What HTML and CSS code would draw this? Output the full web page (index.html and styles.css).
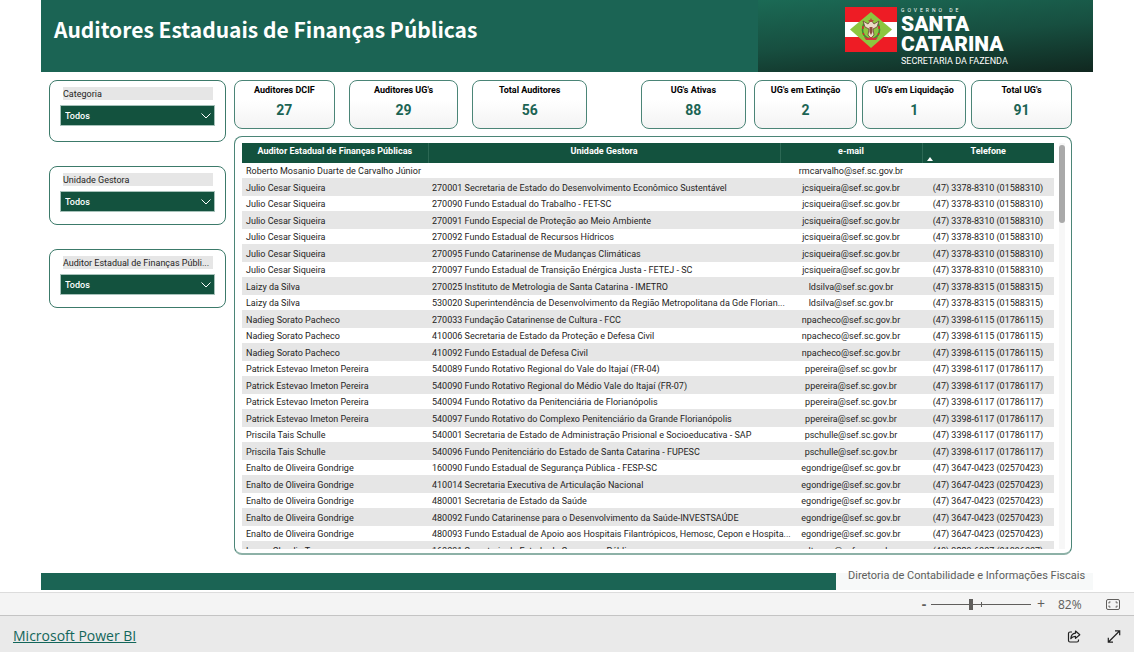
FILE: index.html
```html
<!DOCTYPE html>
<html lang="pt-BR">
<head>
<meta charset="utf-8">
<meta name="viewport" content="width=device-width, initial-scale=1">
<title>Auditores Estaduais de Finanças Públicas</title>
<link rel="stylesheet" href="styles.css">
</head>
<body>
<main class="report">
  <header class="banner">
    <h1 class="banner-title">Auditores Estaduais de Finanças Públicas</h1>
    <div class="brand">
      <svg class="flag" viewBox="0 0 52 45" aria-hidden="true">
        <rect width="52" height="15" fill="#ee1c25"/>
        <rect y="15" width="52" height="15" fill="#fff"/>
        <rect y="30" width="52" height="15" fill="#ee1c25"/>
        <path d="M26 5 47 22.500 26 41 5 22.500z" fill="#8cc63f"/>
        <path d="M19 16q-3 7 0 12q3 4 7 4q4 0 7-4q3-5 0-12" fill="none" stroke="#3c8a35" stroke-width="1.500"/>
        <path d="M18 19v3M34 19v3M18 26l1 2M34 26l-1 2" stroke="#d8282f" stroke-width="1.500"/>
        <path d="M18 14l5 3 3-4 3 4 5-3-2 6-4 2 1 6-3 3-3-3 1-6-4-2z" fill="#ecdcc8" stroke="#6b4437" stroke-width=".8"/>
        <path d="M26 11l1 2h2l-2 2h-2l-2-2h2z" fill="#b5493c"/>
        <path d="M24.500 20h3v5l-1.500 3-1.500-3z" fill="#8d4b3b"/>
        <path d="M19 30l4 1 3-1 3 1 4-1-2 3h-10z" fill="#d3343a"/>
      </svg>
      <div class="brand-text">
        <span class="brand-over">GOVERNO DE</span>
        <span class="brand-name">SANTA</span>
        <span class="brand-name">CATARINA</span>
        <span class="brand-unit">SECRETARIA DA FAZENDA</span>
      </div>
    </div>
  </header>

  <div class="content">
    <aside class="filters">
      <div class="filter filter-first">
        <label for="f-cat">Categoria</label>
        <div class="select-box"><select id="f-cat"><option>Todos</option></select>
          <svg viewBox="0 0 10 6" aria-hidden="true"><path d="M.5.5 5 5 9.500.5"/></svg></div>
      </div>
      <div class="filter">
        <label for="f-ug">Unidade Gestora</label>
        <div class="select-box"><select id="f-ug"><option>Todos</option></select>
          <svg viewBox="0 0 10 6" aria-hidden="true"><path d="M.5.5 5 5 9.500.5"/></svg></div>
      </div>
      <div class="filter">
        <label for="f-aud">Auditor Estadual de Finanças Públi...</label>
        <div class="select-box"><select id="f-aud"><option>Todos</option></select>
          <svg viewBox="0 0 10 6" aria-hidden="true"><path d="M.5.5 5 5 9.500.5"/></svg></div>
      </div>
    </aside>

    <div class="data">
      <div class="cards">
        <div class="cards-auditors">
          <section class="card"><h2>Auditores DCIF</h2><p>27</p></section>
          <section class="card"><h2>Auditores UG's</h2><p>29</p></section>
          <section class="card"><h2>Total Auditores</h2><p>56</p></section>
        </div>
        <div class="cards-units">
          <section class="card card-active"><h2>UG's Ativas</h2><p>88</p></section>
          <section class="card"><h2>UG's em Extinção</h2><p>2</p></section>
          <section class="card"><h2>UG's em Liquidação</h2><p>1</p></section>
          <section class="card"><h2>Total UG's</h2><p>91</p></section>
        </div>
      </div>

      <div class="panel">
        <div class="viewport">
          <table class="grid">
            <colgroup><col class="c-name"><col class="c-unit"><col class="c-mail"><col class="c-phone"></colgroup>
            <thead><tr><th>Auditor Estadual de Finanças Públicas</th><th>Unidade Gestora</th><th>e-mail</th><th class="sorted">Telefone</th></tr></thead>
            <tbody>
              <tr><td>Roberto Mosanio Duarte de Carvalho Júnior</td><td></td><td>rmcarvalho@sef.sc.gov.br</td><td></td></tr>
              <tr><td>Julio Cesar Siqueira</td><td>270001 Secretaria de Estado do Desenvolvimento Econômico Sustentável</td><td>jcsiqueira@sef.sc.gov.br</td><td>(47) 3378-8310 (01588310)</td></tr>
              <tr><td>Julio Cesar Siqueira</td><td>270090 Fundo Estadual do Trabalho - FET-SC</td><td>jcsiqueira@sef.sc.gov.br</td><td>(47) 3378-8310 (01588310)</td></tr>
              <tr><td>Julio Cesar Siqueira</td><td>270091 Fundo Especial de Proteção ao Meio Ambiente</td><td>jcsiqueira@sef.sc.gov.br</td><td>(47) 3378-8310 (01588310)</td></tr>
              <tr><td>Julio Cesar Siqueira</td><td>270092 Fundo Estadual de Recursos Hídricos</td><td>jcsiqueira@sef.sc.gov.br</td><td>(47) 3378-8310 (01588310)</td></tr>
              <tr><td>Julio Cesar Siqueira</td><td>270095 Fundo Catarinense de Mudanças Climáticas</td><td>jcsiqueira@sef.sc.gov.br</td><td>(47) 3378-8310 (01588310)</td></tr>
              <tr><td>Julio Cesar Siqueira</td><td>270097 Fundo Estadual de Transição Enérgica Justa - FETEJ - SC</td><td>jcsiqueira@sef.sc.gov.br</td><td>(47) 3378-8310 (01588310)</td></tr>
              <tr><td>Laizy da Silva</td><td>270025 Instituto de Metrologia de Santa Catarina - IMETRO</td><td>ldsilva@sef.sc.gov.br</td><td>(47) 3378-8315 (01588315)</td></tr>
              <tr><td>Laizy da Silva</td><td>530020 Superintendência de Desenvolvimento da Região Metropolitana da Gde Florian...</td><td>ldsilva@sef.sc.gov.br</td><td>(47) 3378-8315 (01588315)</td></tr>
              <tr><td>Nadieg Sorato Pacheco</td><td>270033 Fundação Catarinense de Cultura - FCC</td><td>npacheco@sef.sc.gov.br</td><td>(47) 3398-6115 (01786115)</td></tr>
              <tr><td>Nadieg Sorato Pacheco</td><td>410006 Secretaria de Estado da Proteção e Defesa Civil</td><td>npacheco@sef.sc.gov.br</td><td>(47) 3398-6115 (01786115)</td></tr>
              <tr><td>Nadieg Sorato Pacheco</td><td>410092 Fundo Estadual de Defesa Civil</td><td>npacheco@sef.sc.gov.br</td><td>(47) 3398-6115 (01786115)</td></tr>
              <tr><td>Patrick Estevao Imeton Pereira</td><td>540089 Fundo Rotativo Regional do Vale do Itajaí (FR-04)</td><td>ppereira@sef.sc.gov.br</td><td>(47) 3398-6117 (01786117)</td></tr>
              <tr><td>Patrick Estevao Imeton Pereira</td><td>540090 Fundo Rotativo Regional do Médio Vale do Itajaí (FR-07)</td><td>ppereira@sef.sc.gov.br</td><td>(47) 3398-6117 (01786117)</td></tr>
              <tr><td>Patrick Estevao Imeton Pereira</td><td>540094 Fundo Rotativo da Penitenciária de Florianópolis</td><td>ppereira@sef.sc.gov.br</td><td>(47) 3398-6117 (01786117)</td></tr>
              <tr><td>Patrick Estevao Imeton Pereira</td><td>540097 Fundo Rotativo do Complexo Penitenciário da Grande Florianópolis</td><td>ppereira@sef.sc.gov.br</td><td>(47) 3398-6117 (01786117)</td></tr>
              <tr><td>Priscila Tais Schulle</td><td>540001 Secretaria de Estado de Administração Prisional e Socioeducativa - SAP</td><td>pschulle@sef.sc.gov.br</td><td>(47) 3398-6117 (01786117)</td></tr>
              <tr><td>Priscila Tais Schulle</td><td>540096 Fundo Penitenciário do Estado de Santa Catarina - FUPESC</td><td>pschulle@sef.sc.gov.br</td><td>(47) 3398-6117 (01786117)</td></tr>
              <tr><td>Enalto de Oliveira Gondrige</td><td>160090 Fundo Estadual de Segurança Pública - FESP-SC</td><td>egondrige@sef.sc.gov.br</td><td>(47) 3647-0423 (02570423)</td></tr>
              <tr><td>Enalto de Oliveira Gondrige</td><td>410014 Secretaria Executiva de Articulação Nacional</td><td>egondrige@sef.sc.gov.br</td><td>(47) 3647-0423 (02570423)</td></tr>
              <tr><td>Enalto de Oliveira Gondrige</td><td>480001 Secretaria de Estado da Saúde</td><td>egondrige@sef.sc.gov.br</td><td>(47) 3647-0423 (02570423)</td></tr>
              <tr><td>Enalto de Oliveira Gondrige</td><td>480092 Fundo Catarinense para o Desenvolvimento da Saúde-INVESTSAÚDE</td><td>egondrige@sef.sc.gov.br</td><td>(47) 3647-0423 (02570423)</td></tr>
              <tr><td>Enalto de Oliveira Gondrige</td><td>480093 Fundo Estadual de Apoio aos Hospitais Filantrópicos, Hemosc, Cepon e Hospita...</td><td>egondrige@sef.sc.gov.br</td><td>(47) 3647-0423 (02570423)</td></tr>
              <tr><td>Luana Claudia Torres</td><td>160091 Secretaria de Estado da Segurança Pública</td><td>ltorres@sef.sc.gov.br</td><td>(48) 3229-6007 (01896007)</td></tr>
            </tbody>
          </table>
        </div>
        <div class="scrollbar"><div class="thumb"></div></div>
      </div>
    </div>
  </div>

  <div class="closing">
    <div class="closing-bar"></div>
    <p class="closing-note">Diretoria de Contabilidade e Informações Fiscais</p>
  </div>
</main>

<div class="zoombar">
  <button class="zoom-step" aria-label="Reduzir">-</button>
  <input class="zoom-range" type="range" min="0" max="100" value="40" aria-label="Zoom">
  <button class="zoom-step" aria-label="Ampliar">+</button>
  <span class="zoom-value">82%</span>
  <button class="icon-button" aria-label="Ajustar à página">
    <svg width="14" height="11" viewBox="0 0 14 11" fill="none" stroke="#605e5c"><rect x=".5" y=".5" width="13" height="10" rx="1.500"/><path d="M4.500 3H3v1.500M9.500 3H11v1.500M4.500 8H3V6.500M9.500 8H11V6.500"/></svg>
  </button>
</div>

<footer class="hostbar">
  <a href="#">Microsoft Power BI</a>
  <div class="host-actions">
    <button class="icon-button" aria-label="Compartilhar">
      <svg width="14" height="13" viewBox="0 0 14 13" fill="none" stroke="#222" stroke-width="1.200" stroke-linejoin="round"><path d="M5 2H3Q1.500 2 1.500 3.500v7Q1.500 12 3 12h7q1.500 0 1.500-1.500V9.500"/><path d="M8.500 1l4.300 3.700-4.300 3.700V6.300Q5.500 6.200 3.800 8.700 4.200 3.500 8.500 3.200z"/></svg>
    </button>
    <button class="icon-button" aria-label="Tela inteira">
      <svg width="14" height="13" viewBox="0 0 14 13" fill="none" stroke="#222" stroke-width="1.200"><path d="M1.500 12 12.500 1M8 .8h4.700v4.500M1.300 7.700v4.500H6"/></svg>
    </button>
  </div>
</footer>
</body>
</html>
```
FILE: styles.css
```css
* { box-sizing: border-box; }

body {
  margin: 0;
  min-height: 100vh;
  display: flex;
  flex-direction: column;
  background: #fff;
  color: #252423;
  font-family: Roboto, "Noto Sans", sans-serif;
  font-size: 9px;
}

h1, h2, p { margin: 0; }

button {
  padding: 0;
  border: 0;
  background: none;
  font: inherit;
  color: inherit;
}

.report {
  flex: 1;
  display: flex;
  flex-direction: column;
  padding: 0 41px 2px;
}

/* Banner */
.banner {
  display: grid;
  grid-template-columns: 717fr 335fr;
  height: 72px;
  background: #1b6454;
}

.banner-title {
  padding: 14px 13px;
  color: #fff;
  font-family: "Noto Sans CJK JP", "Open Sans", sans-serif;
  font-size: 21px;
  line-height: 30px;
  font-weight: 700;
  white-space: nowrap;
}

.brand {
  display: flex;
  gap: 4px;
  padding: 7px 0 0 87px;
  background: linear-gradient(175deg, #1b6a55 0%, #174f40 50%, #10271f 100%);
  color: #fff;
}

.flag { width: 52px; height: 45px; }

.brand-text {
  display: flex;
  flex-direction: column;
  white-space: nowrap;
}

.brand-over { font-size: 5px; line-height: 7px; letter-spacing: 3px; }
.brand-name { font-size: 21px; line-height: 20px; font-weight: 900; }
.brand-unit { font-size: 9px; line-height: 14px; }

/* Body of the report */
.content {
  flex: 1;
  display: grid;
  grid-template-columns: 177px 1fr;
  gap: 8px;
  padding: 8px 21px 18px 8px;
}

.filters {
  display: flex;
  flex-direction: column;
  gap: 24px;
}

.filter {
  min-height: 59px;
  padding: 6px 10px 8px;
  border: 1px solid #3c7a6a;
  border-radius: 8px;
}

.filter-first { min-height: 62px; }

.filter label {
  display: block;
  margin: 0 2px 5px 3px;
  padding-top: 2px;
  background: #e6e6e6;
  color: #252423;
  line-height: 11px;
  white-space: nowrap;
}

.select-box { position: relative; }

.select-box select {
  display: block;
  width: 100%;
  height: 21px;
  padding: 2px 4px 0;
  border: 1px solid #a7c2ba;
  border-radius: 0;
  appearance: none;
  background: #13523e;
  color: #fff;
  font: 500 9px/17px Roboto, sans-serif;
}

.select-box svg {
  position: absolute;
  top: 8px;
  right: 4px;
  width: 10px;
  height: 6px;
  fill: none;
  stroke: #fff;
  pointer-events: none;
}

.data {
  display: flex;
  flex-direction: column;
  gap: 7px;
  min-width: 0;
}

.cards { display: flex; gap: 54px; }
.cards-auditors { flex: 353; display: grid; grid-template-columns: 101fr 110fr 115fr; gap: 14px; }
.cards-units { flex: 431; display: grid; grid-template-columns: 108fr 104fr 104fr 101fr; gap: 5px; }

.card {
  padding: 3px 0 7px;
  border: 1px solid #4b8577;
  border-radius: 8px;
  background: linear-gradient(#fff 40%, #f3f3f3);
  text-align: center;
  white-space: nowrap;
}

.card-active { margin-right: 3px; }
.card h2 { color: #000; font-size: 9px; line-height: 13px; font-weight: 700; }
.card p { margin-top: 2px; color: #1b6454; font-size: 14px; line-height: 22px; font-weight: 700; }

.panel {
  flex: 1;
  display: flex;
  gap: 5px;
  padding: 6px 6px 4px 7px;
  border: 1px solid #4b8577;
  border-bottom: 2px solid #8db1a7;
  border-radius: 8px;
}

.viewport {
  flex: 1 1 0;
  height: 0;
  min-height: 100%;
  overflow: hidden;
}

.grid {
  width: 100%;
  table-layout: fixed;
  border-collapse: collapse;
}

.c-name { width: 186px; }
.c-mail { width: 142px; }
.c-phone { width: 132px; }

.grid th {
  position: relative;
  height: 20px;
  padding: 0 0 4px;
  border-right: 1px solid #2c6854;
  background: #13523e;
  color: #fff;
  line-height: 16px;
  font-weight: 700;
}

.grid th:last-child { border-right: 0; }

.sorted::before {
  content: "";
  position: absolute;
  left: 4px;
  bottom: 2px;
  border: 3px solid transparent;
  border-top: 0;
  border-bottom: 4px solid #fff;
}

.grid td {
  height: 15px;
  padding: 2px 4px 0;
  line-height: 13px;
  white-space: nowrap;
}

.grid tr:nth-child(even) td { height: 18px; line-height: 16px; background: #e6e6e6; }
.grid td:nth-child(n+3) { text-align: center; }

.scrollbar { width: 6px; padding-top: 2px; background: #f7f7f7; }
.thumb { height: 78px; border-radius: 3px; background: #a9a9a9; }

.closing {
  display: grid;
  grid-template-columns: 795fr 257fr;
  height: 17px;
}

.closing-bar { background: #1b6454; }

.closing-note {
  padding-left: 12px;
  background: #f7f9f9;
  color: #605e5c;
  font-size: 11px;
  line-height: 5px;
  white-space: nowrap;
}

/* Viewer controls */
.zoombar {
  display: flex;
  align-items: center;
  justify-content: flex-end;
  height: 24px;
  padding-right: 14px;
  border-top: 1px solid #dcdcdc;
  border-bottom: 1px solid #c4c4c4;
  background: #f4f4f4;
  color: #605e5c;
  font-family: "Open Sans", sans-serif;
}

.zoom-step { width: 20px; font-size: 14px; line-height: 20px; }
.zoom-step:first-child { width: 14px; font-weight: 700; }

.zoom-range {
  width: 100px;
  height: 12px;
  margin: 0;
  appearance: none;
  background:
    linear-gradient(#605e5c, #605e5c) center / 1px 5px no-repeat,
    linear-gradient(#605e5c, #605e5c) center / 100% 1px no-repeat;
}

.zoom-range::-webkit-slider-thumb {
  appearance: none;
  width: 4px;
  height: 11px;
  background: #605e5c;
}

.zoom-value { width: 55px; padding-left: 7px; font-size: 12px; }
.icon-button { display: flex; }

.hostbar {
  display: flex;
  align-items: center;
  justify-content: space-between;
  height: 36px;
  padding: 4px 13px 0;
  background: #eaeaea;
}

.hostbar a { color: #13665a; font-family: "Open Sans", sans-serif; font-size: 14px; line-height: 20px; }
.host-actions { display: flex; gap: 26px; }
```
